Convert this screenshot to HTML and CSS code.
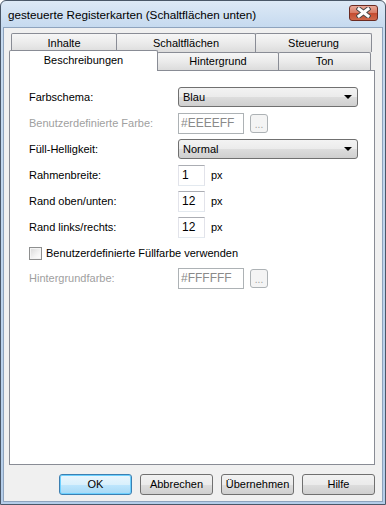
FILE: index.html
```html
<!DOCTYPE html>
<html>
<head>
    <title>gesteuerte Registerkarten</title>
    <link rel="stylesheet" href="styles.css">
</head>
<body>
    <div class="window">
        <div class="titlebar">
            <span class="title">gesteuerte Registerkarten (Schaltflächen unten)</span>
            <div class="close">
                <svg width="15" height="11" viewBox="0 0 15 11">
                    <path d="M3 2 L12 9 M12 2 L3 9" stroke="#4b4b4b" stroke-width="5" stroke-linecap="square" fill="none"/>
                    <path d="M3 2 L12 9 M12 2 L3 9" stroke="#ffffff" stroke-width="3" stroke-linecap="square" fill="none"/>
                </svg>
            </div>
        </div>
        <div class="client">
            <div class="tabs">
                <div class="tabrow back">
                    <div class="tab t-inhalte">Inhalte</div>
                    <div class="tab t-schalt">Schaltflächen</div>
                    <div class="tab t-steuer">Steuerung</div>
                </div>
                <div class="tabrow front">
                    <div class="tab selected">Beschreibungen</div>
                    <div class="tab t-hinter">Hintergrund</div>
                    <div class="tab t-ton">Ton</div>
                </div>
            </div>
            <div class="panel">
                <div class="row">
                    <span class="lbl">Farbschema:</span>
                    <div class="combo">Blau<span class="arrow"></span></div>
                </div>
                <div class="row">
                    <span class="lbl disabled">Benutzerdefinierte Farbe:</span>
                    <div class="textbox wide off">#EEEEFF</div>
                    <div class="dots">...</div>
                </div>
                <div class="row">
                    <span class="lbl">Füll-Helligkeit:</span>
                    <div class="combo">Normal<span class="arrow"></span></div>
                </div>
                <div class="row">
                    <span class="lbl">Rahmenbreite:</span>
                    <div class="textbox small">1</div>
                    <span class="unit">px</span>
                </div>
                <div class="row">
                    <span class="lbl">Rand oben/unten:</span>
                    <div class="textbox small">12</div>
                    <span class="unit">px</span>
                </div>
                <div class="row">
                    <span class="lbl">Rand links/rechts:</span>
                    <div class="textbox small">12</div>
                    <span class="unit">px</span>
                </div>
                <div class="row checkrow">
                    <span class="check"></span>
                    <span class="checktext">Benutzerdefinierte Füllfarbe verwenden</span>
                </div>
                <div class="row">
                    <span class="lbl disabled">Hintergrundfarbe:</span>
                    <div class="textbox wide off">#FFFFFF</div>
                    <div class="dots">...</div>
                </div>
            </div>
            <div class="buttons">
                <div class="btn default">OK</div>
                <div class="btn">Abbrechen</div>
                <div class="btn">Übernehmen</div>
                <div class="btn">Hilfe</div>
            </div>
        </div>
    </div>
</body>
</html>
```

FILE: styles.css
```css
body {
    margin: 0;
    background: #ffffff;
    font-family: "Liberation Sans", Arial, sans-serif;
    font-size: 11px;
    color: #000000;
}
.window {
    width: 386px;
    height: 505px;
    box-sizing: border-box;
    border: 1px solid #4a5768;
    border-radius: 6px 6px 0 0;
    padding: 0 2px 2px 2px;
    background: linear-gradient(to bottom, #dde9f6 0, #c6daef 26px, #b4cde9 100%);
    display: flex;
    flex-direction: column;
}
.titlebar {
    height: 26px;
    display: flex;
    align-items: center;
    justify-content: space-between;
    padding: 0 5px 0 5px;
}
.title {
    font-size: 11.7px;
    color: #000000;
    margin-top: 1px;
}
.close {
    width: 29px;
    height: 16px;
    box-sizing: border-box;
    border: 1px solid #6b2b22;
    border-radius: 3px;
    background: linear-gradient(to bottom, #e9a99a 0, #d87a63 50%, #c44a2f 51%, #cf6a4c 100%);
    display: flex;
    align-items: center;
    justify-content: center;
    margin-top: -3px;
}
.client {
    flex: 1;
    background: #f0f0f0;
    border: 1px solid #8ea3bd;
    padding: 5px 7px 0 5px;
    display: flex;
    flex-direction: column;
}
.tabs {
    margin-left: 2px;
    width: 361px;
}
.tabrow {
    display: flex;
    height: 19px;
}
.tabrow.front {
    height: 18px;
}
.tab {
    box-sizing: border-box;
    border: 1px solid #898c95;
    border-bottom: none;
    border-radius: 2px 2px 0 0;
    background: linear-gradient(to bottom, #f6f6f6 0, #ebebeb 50%, #dcdcdc 100%);
    text-align: center;
    line-height: 18px;
    margin-right: -1px;
}
.t-inhalte { width: 106px; }
.t-schalt { width: 140px; }
.t-steuer { width: 117px; }
.tab.selected {
    width: 149px;
    height: 21px;
    margin-left: -2px;
    margin-top: -2px;
    background: #ffffff;
    position: relative;
    z-index: 2;
    line-height: 18px;
}
.t-hinter { width: 122px; line-height: 17px; }
.t-ton { width: 93px; line-height: 17px; }
.panel {
    flex: 1;
    background: #ffffff;
    border: 1px solid #898c95;
    padding: 16px 0 0 19px;
}
.row {
    display: flex;
    align-items: center;
    height: 20px;
    margin-bottom: 6px;
}
.lbl {
    width: 149px;
}
.disabled {
    color: #a0a0a0;
}
.combo {
    width: 180px;
    height: 20px;
    box-sizing: border-box;
    border: 1px solid #707070;
    border-radius: 3px;
    background: linear-gradient(to bottom, #f3f3f3 0, #ebebeb 50%, #dddddd 51%, #cfcfcf 100%);
    padding-left: 4px;
    display: flex;
    align-items: center;
    justify-content: space-between;
}
.arrow {
    width: 0;
    height: 0;
    border-left: 4px solid transparent;
    border-right: 4px solid transparent;
    border-top: 4px solid #000000;
    margin-right: 5px;
}
.textbox {
    height: 21px;
    box-sizing: border-box;
    border: 1px solid #e2e3ea;
    border-top-color: #abadb3;
    border-bottom-color: #e3e9ef;
    background: #ffffff;
    padding-left: 3px;
    display: flex;
    align-items: center;
    font-size: 12px;
}
.textbox.wide {
    width: 66px;
}
.textbox.small {
    width: 27px;
}
.textbox.off {
    border: 1px solid #adb2b5;
    color: #8a8a8a;
    padding-left: 2px;
}
.dots {
    width: 18px;
    height: 19px;
    box-sizing: border-box;
    margin-left: 6px;
    border: 1px solid #adb2b5;
    border-radius: 3px;
    background: #f4f4f4;
    color: #a0a0a0;
    text-align: center;
    line-height: 20px;
    font-size: 10px;
}
.unit {
    margin-left: 6px;
}
.checkrow {
    margin-top: 1px;
    margin-bottom: 5px;
}
.check {
    width: 13px;
    height: 13px;
    box-sizing: border-box;
    border: 1px solid #8e8f8f;
    background: linear-gradient(135deg, #d8d8d8 0, #f4f4f4 60%, #ffffff 100%);
    box-shadow: inset 0 0 0 1px #f4f4f4;
    margin-right: 4px;
}
.buttons {
    display: flex;
    justify-content: flex-end;
    gap: 8px;
    height: 21px;
    margin: 9px 0 6px 0;
}
.btn {
    width: 73px;
    box-sizing: border-box;
    border: 1px solid #707070;
    border-radius: 3px;
    background: linear-gradient(to bottom, #f2f2f2 0, #ebebeb 50%, #dddddd 51%, #cfcfcf 100%);
    text-align: center;
    line-height: 19px;
    font-size: 11px;
}
.btn.default {
    border-color: #3c7fb1;
    background: linear-gradient(to bottom, #eaf6fd 0, #d9f0fc 50%, #bee6fd 51%, #a7d9f5 100%);
    box-shadow: inset 0 0 0 1px #6cd0ff;
}
```
